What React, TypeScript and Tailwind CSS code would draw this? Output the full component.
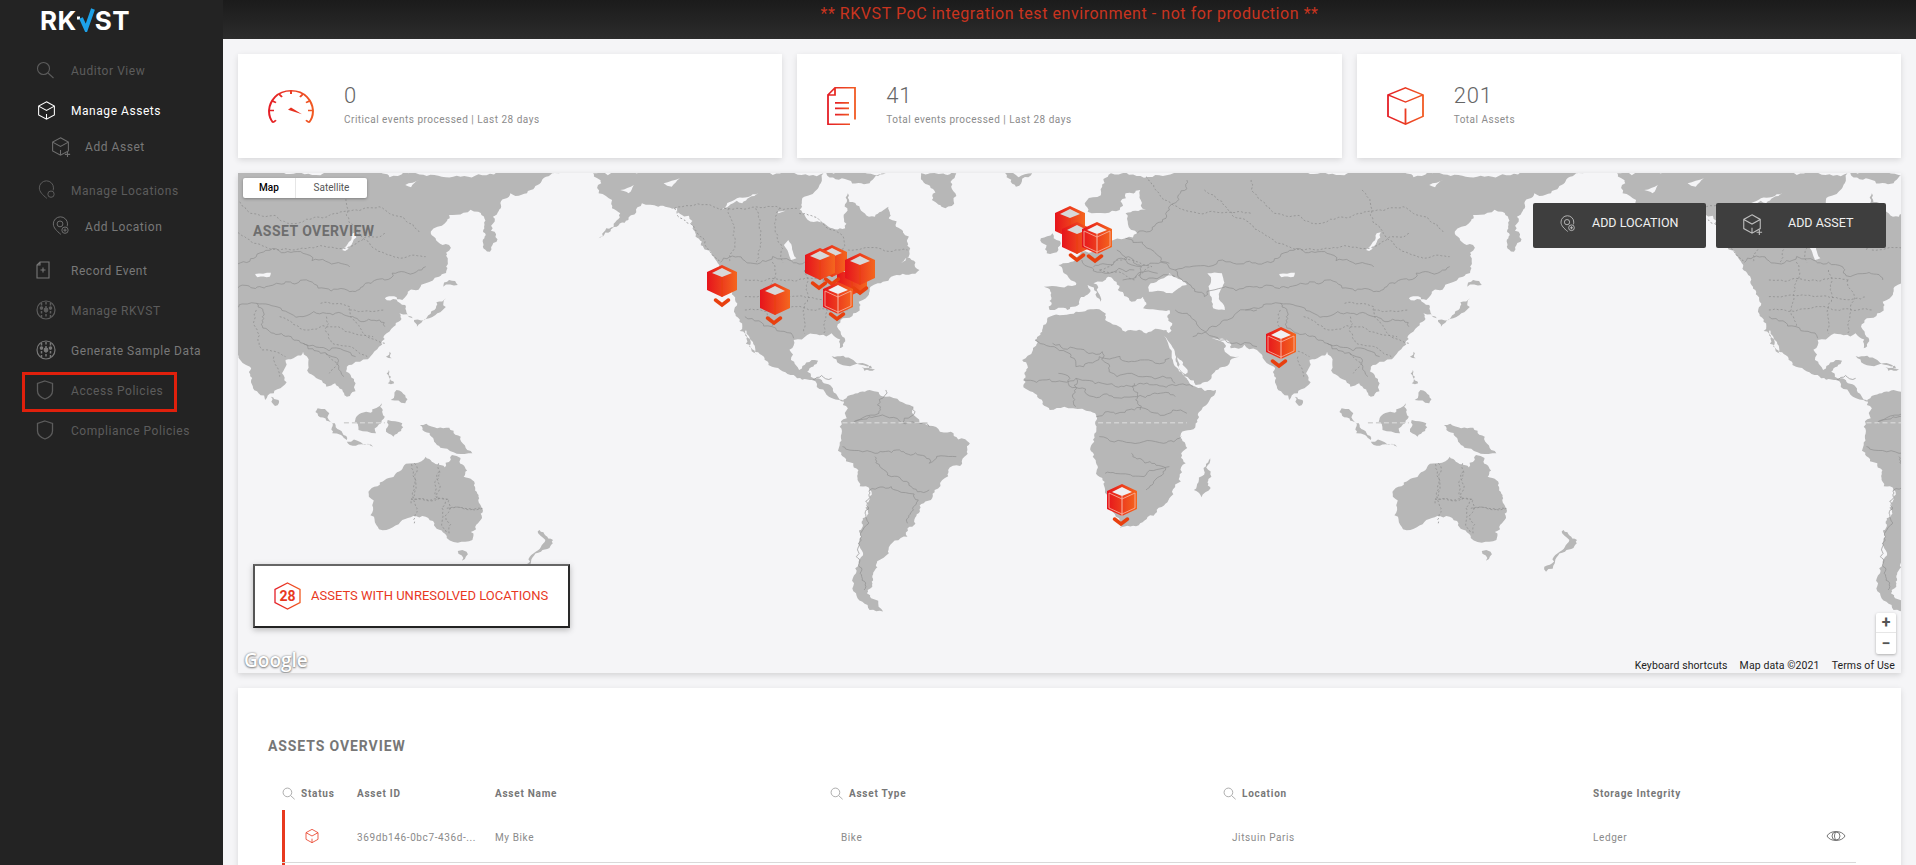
import type { ReactNode } from "react"

const FONT = "font-['Roboto',sans-serif]"

// ---- small line icons ----
function Cube({ size = 20, stroke = "currentColor", plus = false, width = 1.2 }: { size?: number; stroke?: string; plus?: boolean; width?: number }) {
  return (
    <svg width={size} height={size} viewBox="0 0 24 24" fill="none" stroke={stroke} strokeWidth={width}>
      <path d="M12 2 21 7v10l-9 5-9-5V7z M3 7l9 5 9-5 M12 16v6" />
      {plus && <path d="M20 18v6 M17 21h6" />}
    </svg>
  )
}

function Pin({ size = 20, plus = false, stroke = "currentColor" }: { size?: number; plus?: boolean; stroke?: string }) {
  return (
    <svg width={size} height={size} viewBox="0 0 24 24" fill="none" stroke={stroke} strokeWidth="1.2">
      <path d="M13 22C8 18 4 14 4 9.500a8.500 8.500 0 0 1 17 0c0 1-.2 2-.5 3" />
      {plus ? <circle cx="12" cy="9.500" r="3.500" /> : null}
      <circle cx="18" cy="17" r="3.800" />
      {plus && <path d="M18 15v4 M16 17h4" />}
    </svg>
  )
}

function Sliders() {
  return (
    <svg width="20" height="20" viewBox="0 0 20 20" fill="none" stroke="currentColor" strokeWidth="1.2">
      <circle cx="10" cy="10" r="9" />
      <path d="M5.500 3v14 M10 2v16 M14.500 3v14" strokeWidth="1.500" strokeDasharray="2.500 1.500" />
      <circle cx="10" cy="10" r="1.800" fill="currentColor" />
      <circle cx="5.500" cy="8" r="1.200" fill="currentColor" />
      <circle cx="14.500" cy="8" r="1.200" fill="currentColor" />
    </svg>
  )
}

function Shield() {
  return (
    <svg width="18" height="20" viewBox="0 0 18 20" fill="none" stroke="currentColor" strokeWidth="1.3">
      <path d="M9 1 16.500 3.500V11c0 3.500-3.500 6.500-7.500 8-4-1.500-7.500-4.500-7.500-8V3.500z" />
    </svg>
  )
}

function Magnifier({ className = "" }: { className?: string }) {
  return (
    <svg className={className} width="18" height="18" viewBox="0 0 18 18" fill="none" stroke="currentColor" strokeWidth="1.100">
      <circle cx="7.500" cy="7.500" r="6" />
      <path d="M12 12l5.500 5" />
    </svg>
  )
}

function DocPlus() {
  return (
    <svg width="14" height="18" viewBox="0 0 14 18" fill="none" stroke="currentColor" strokeWidth="1.100">
      <path d="M4 1h9v16H1V4z M4 1v3H1 M7 6.500v5 M4.500 9h5" />
    </svg>
  )
}

// ---- sidebar ----
function NavItem({ icon, label, tone = "text-[#5c5c5c]", sub = false }: { icon: ReactNode; label: string; tone?: string; sub?: boolean }) {
  return (
    <div className={sub ? `h-8 mb-2 flex items-center pl-[50px] ${tone}` : `h-10 flex items-center pl-[36px] ${tone}`}>
      <span className="w-[35px] flex">{icon}</span>
      <span className="text-[12px] tracking-[0.55px] whitespace-nowrap pt-[2px]">{label}</span>
    </div>
  )
}

function Sidebar() {
  return (
    <aside className="w-[223px] shrink-0 bg-[#232323] h-full">
      <div className="h-[50px] pl-[40px] flex items-start pt-[5px]">
        <span className="font-['Inter',sans-serif] font-bold text-[26px] leading-[32px] text-white tracking-[0.5px]">RK</span>
        <svg width="20" height="24" viewBox="0 0 20 24" className="mt-[3px] -mx-[1px]" fill="none">
          <path d="M1 10h3" stroke="#fff" strokeWidth="3" />
          <path d="M5 10l5 11L17 1" stroke="#1da1e8" strokeWidth="4" />
        </svg>
        <span className="font-['Inter',sans-serif] font-bold text-[26px] leading-[32px] text-white tracking-[0.5px]">ST</span>
      </div>
      <NavItem icon={<Magnifier />} label="Auditor View" />
      <NavItem icon={<Cube size={21} stroke="#fff" />} label="Manage Assets" tone="text-white" />
      <NavItem sub icon={<Cube size={21} plus stroke="#6f6f6f" />} label="Add Asset" tone="text-[#787878]" />
      <NavItem icon={<Pin />} label="Manage Locations" />
      <NavItem sub icon={<Pin plus stroke="#6f6f6f" />} label="Add Location" tone="text-[#787878]" />
      <NavItem icon={<DocPlus />} label="Record Event" tone="text-[#787878]" />
      <NavItem icon={<Sliders />} label="Manage RKVST" />
      <NavItem icon={<Sliders />} label="Generate Sample Data" tone="text-[#787878]" />
      <div className="relative">
        <NavItem icon={<Shield />} label="Access Policies" />
        <div className="absolute left-[22px] top-[2px] w-[155px] h-[40px] border-[3px] border-[#e0200c]" />
      </div>
      <NavItem icon={<Shield />} label="Compliance Policies" />
    </aside>
  )
}

// ---- stat cards ----
function Gauge() {
  return (
    <svg width="46" height="36" viewBox="0 0 46 48" preserveAspectRatio="none" fill="none" stroke="url(#redOrange)" strokeWidth="2">
      <path d="M5 46C-1 36 0 22 7 12 15 1 31 1 39 12c7 10 8 24 2 34" />
      <path d="M23 3v5 M11 8l3 4 M35 8l-3 4 M4 17l4 2.500 M42 17l-4 2.500 M1 30h5 M45 30h-5 M5 46l3-3 M41 46l-3-3" />
      <path d="M20 29l3-3 11 9z" fill="#e8301f" stroke="none" />
    </svg>
  )
}

function Doc() {
  return (
    <svg width="29" height="38" viewBox="0 0 29 48" preserveAspectRatio="none" fill="none" stroke="url(#redOrange)" strokeWidth="1.800">
      <path d="M8 1h20v40 M1 10 8 1v9H1v37h22" />
      <path d="M8 20h14 M8 27h14 M8 35h14" strokeWidth="2.200" />
    </svg>
  )
}

function BigCube() {
  return (
    <svg width="37" height="38" viewBox="0 0 37 48" preserveAspectRatio="none" fill="none" stroke="url(#redOrange)" strokeWidth="1.800">
      <path d="M18.500 1 36 10v27l-17.500 10L1 37V10z M1 10l17.500 9L36 10 M18.500 27v20" />
    </svg>
  )
}

function StatCard({ icon, value, label }: { icon: ReactNode; value: string; label: string }) {
  return (
    <div className="flex-1 h-[104px] bg-white shadow-[0_2px_6px_rgba(0,0,0,0.12)] flex items-center pl-[30px] gap-[30px]">
      {icon}
      <div className="pb-[2px]">
        <div className="text-[22px] leading-[26px] font-light text-[#666] tracking-[0.8px]">{value}</div>
        <div className="text-[10px] leading-[14px] mt-[4px] text-[#8c8c8c] tracking-[0.5px]">{label}</div>
      </div>
    </div>
  )
}

// ---- map drawing, traced by hand ----
const LAND = "#b7b7b7"
const WATER = "#f5f5f7"

// polygons in the coordinates of a stretched crop, see the group transforms
const americas = [
  "670,10 685,40 680,70 705,90 720,130 680,205 735,150 760,100 790,110 825,115 855,170 880,240 900,280 925,360 940,455 972,555 952,480 985,560 1000,590 1040,615 1075,630 1105,680 1130,695 1145,675 1180,660 1210,680 1260,710 1285,765 1330,785 1365,820 1355,860 1325,900 1300,960 1280,1000 1250,1075 1250,1100 1215,1140 1190,1200 1175,1270 1205,1325 1180,1320 1155,1270 1155,1210 1165,1100 1180,960 1150,880 1125,825 1125,770 1140,715 1130,690 1110,650 1085,625 1065,605 1085,572 1050,600 1035,570 1040,510 1065,495 1110,490 1125,535 1130,500 1120,470 1150,430 1160,395 1195,340 1230,315 1272,300 1250,262 1225,285 1255,235 1215,110 1190,140 1140,70 1135,175 1100,165 1060,135 1055,100 1090,40 1095,10",
  "1100,10 1210,10 1180,40 1140,30",
  "1275,10 1340,10 1320,115 1295,90",
  "1430,10 1480,10 1450,50",
  "1110,558 1150,570 1190,600 1150,585",
  "1165,592 1190,598 1170,602",
]

const eurasia = [
  "145,100 175,50 190,10 1000,10 950,60 915,70 885,140 880,245 870,170 860,125 810,135 780,195 810,225 805,290 770,340 730,390 700,385 735,405 748,445 725,430 715,470 690,530 650,575 635,590 650,640 635,680 615,640 600,650 570,610 560,545 530,570 510,670 495,690 470,600 440,540 395,535 355,490 385,545 410,560 385,590 335,645 300,560 280,495 295,460 290,420 245,415 245,380 225,395 185,320 160,340 172,395 150,345 155,360 115,420 85,420 75,350 130,345 100,285 130,265 170,240 215,205 235,190 215,130 250,120 240,60 215,70 205,120 180,130 150,125",
  "38,570 60,510 85,440 130,425 170,418 180,450 215,485 285,480 300,550 335,650 370,660 345,720 310,790 318,880 290,985 240,1060 205,1075 180,960 165,780 165,740 110,710 85,720 40,645",
  "360,865 362,920 345,982 332,960",
  "70,205 90,190 100,240 80,250",
  "505,680 518,690 512,708",
  "810,330 825,345 800,350",
  "805,385 790,430 755,470 750,450 785,420",
  "708,545 712,565 702,560",
  "707,600 716,640 705,640",
  "720,660 735,700 710,690",
  "585,715 605,730 635,810 610,790",
  "635,815 680,830 640,825",
  "650,745 695,700 700,740 685,790 655,780",
  "705,750 730,760 715,800",
  "760,765 800,775 830,800 850,850 800,835 780,800",
  "672,965 700,930 750,880 770,860 795,885 810,905 815,855 835,920 860,990 868,1020 850,1110 825,1118 805,1095 785,1060 770,1040 730,1050 690,1078 680,1020",
  "825,1143 840,1145 832,1172",
  "965,1080 988,1110 970,1140 950,1180 935,1205 932,1190 955,1150 975,1110",
]

// inland water laid over the land
const eurasiaWater = [
  "258,340 290,310 320,345 295,370 255,365",
  "355,310 380,310 385,420 365,415",
  "281,498 300,555 333,642 327,645 294,558",
  "478,312 505,308 503,320 482,322",
  "645,190 652,187 632,243 627,240",
  "735,45 760,30 745,52",
]
const americasWater = [
  "1030,210 1045,265 1035,270 1022,225",
  "905,120 975,70 945,100 935,92",
  "1010,125 1025,122 1012,130",
  "720,60 745,45 735,70",
  "800,40 830,25 815,50",
]

const americasBorders = [
  "905,277 1060,277",
  "1060,277 1100,320 1130,310 1160,330",
  "950,440 1000,470 1040,505",
  "1075,630 1110,625",
  "1150,760 1190,740 1240,760 1290,770",
  "1130,830 1190,850 1230,840 1290,880 1340,860",
  "1190,860 1220,920 1290,960",
  "1180,960 1220,950 1270,990 1250,1060",
  "1180,960 1165,1100 1170,1260",
  "1210,660 1200,720 1150,760",
  "1260,710 1240,760",
]
const americasDashed = [
  "820,115 905,277",
  "920,115 920,277",
  "970,115 970,277",
  "1015,115 1020,277",
  "820,115 1050,115",
  "950,330 1100,330",
  "950,380 1130,380",
  "950,420 1140,420",
  "1000,277 1000,470",
  "1060,300 1060,490",
  "1095,330 1095,490",
  "1050,130 1125,190 1130,240",
  "1140,240 1250,240",
  "340,880 340,1060",
  "385,880 385,990",
  "340,988 400,988 400,1090",
  "400,1015 465,1015",
]

const eurasiaBorders = [
  "60,510 130,590 170,560 240,570 290,565",
  "90,520 175,545 200,620 300,640",
  "40,630 130,625 175,640 240,640 330,650",
  "165,740 230,720 320,730",
  "170,800 280,820 310,800",
  "180,910 250,915 290,890",
  "225,850 280,890 250,960",
  "300,420 340,470 440,530",
  "350,380 440,350 560,330 640,365 700,330 770,290",
  "300,300 400,280 480,260 560,250 640,290",
  "420,420 480,400 560,440 640,440 700,470",
  "480,400 500,480 560,520 650,560",
  "215,205 300,300 350,380",
  "235,190 290,120 320,30",
  "160,290 220,260 250,330 300,320",
  "560,520 610,560 630,620",
  "330,500 370,470 440,420",
  "140,270 180,310 230,300",
  "200,240 240,290 290,280",
  "210,330 270,310",
  "100,610 160,680 230,680 300,680",
  "230,640 240,720",
  "130,625 130,710",
]
const eurasiaDashed = [
  "430,30 470,130 550,160 620,130 690,110 760,190",
  "350,60 400,140 460,200 540,240 640,230 700,190",
  "620,60 640,160 700,250 770,260",
  "170,300 230,330 260,290 200,270 170,300",
  "520,440 570,480 620,470 680,500",
  "590,400 640,410 660,480 700,520",
  "250,20 280,90 340,130 430,130",
  "600,550 620,580 605,610",
  "600,440 610,520 670,560",
  "640,420 700,420",
  "480,420 490,540 530,560",
  "510,560 520,620",
  "745,1000 745,880",
  "793,905 793,990",
  "745,988 810,988 810,1090",
  "810,1015 868,1015",
]

// splits a traced line and shakes the new points, so a coast does not look like a straight ruler
function roughen(points: string, closed: boolean, amp: number) {
  const pts = points.trim().split(/\s+/).map((p) => p.split(",").map(Number))
  let seed = 0
  for (let i = 0; i < points.length; i++) seed = (seed * 31 + points.charCodeAt(i)) % 233280
  const rand = () => {
    seed = (seed * 9301 + 49297) % 233280
    return seed / 233280 - 0.5
  }
  const out: string[] = []
  const split = (a: number[], b: number[]) => {
    const dx = b[0] - a[0]
    const dy = b[1] - a[1]
    const len = Math.hypot(dx, dy)
    if (len < 9) {
      out.push(`${a[0].toFixed(1)},${a[1].toFixed(1)}`)
      return
    }
    const off = Math.min(len * amp, 9) * rand() * 2
    const mid = [a[0] + dx / 2 - (dy / len) * off, a[1] + dy / 2 + (dx / len) * off * 1.5]
    split(a, mid)
    split(mid, b)
  }
  const last = closed ? pts.length : pts.length - 1
  for (let i = 0; i < last; i++) split(pts[i], pts[(i + 1) % pts.length])
  if (!closed) out.push(pts[pts.length - 1].join(","))
  return out.join(" ")
}

function MapLayer({ land, water, borders, dashed }: { land: string[]; water: string[]; borders: string[]; dashed: string[] }) {
  return (
    <>
      {land.map((p) => <polygon key={p} points={roughen(p, true, 0.2)} fill={LAND} />)}
      {water.map((p) => <polygon key={p} points={roughen(p, true, 0.12)} fill={WATER} />)}
      {borders.map((p) => <polyline key={p} points={roughen(p, false, 0.22)} fill="none" stroke="#8f8f8f" strokeWidth="0.7" vectorEffect="non-scaling-stroke" />)}
      {dashed.map((p) => <polyline key={p} points={roughen(p, false, 0.12)} fill="none" stroke="#8f8f8f" strokeWidth="0.8" strokeDasharray="2 2" vectorEffect="non-scaling-stroke" />)}
    </>
  )
}

function World() {
  return (
    <g id="world">
      <g transform="translate(230,170) scale(0.542,0.3333)">
        <MapLayer land={americas} water={americasWater} borders={americasBorders} dashed={americasDashed} />
        <path d="M1130 758H1290" stroke="#d2d2d2" strokeWidth="1.500" strokeDasharray="5 3" vectorEffect="non-scaling-stroke" />
      </g>
      <g transform="translate(1000,170) scale(0.584,0.3333)">
        <MapLayer land={eurasia} water={eurasiaWater} borders={eurasiaBorders} dashed={eurasiaDashed} />
        <path d="M168 758H320 M630 758H700" stroke="#d2d2d2" strokeWidth="1.500" strokeDasharray="5 3" vectorEffect="non-scaling-stroke" />
      </g>
    </g>
  )
}

// pins: top left of the cube, and where its chevron sits
const pins = [
  { x: 837, y: 263, cx: 0, cy: 0, pale: false },
  { x: 707, y: 265, cx: 722, cy: 303, pale: false },
  { x: 760, y: 283, cx: 774, cy: 321, pale: false },
  { x: 817, y: 245, cx: 832, cy: 282, pale: false },
  { x: 805, y: 248, cx: 819, cy: 286, pale: false },
  { x: 845, y: 253, cx: 860, cy: 291, pale: false },
  { x: 823, y: 282, cx: 837, cy: 317, pale: true },
  { x: 1055, y: 206, cx: 0, cy: 0, pale: false },
  { x: 1062, y: 222, cx: 1077, cy: 258, pale: false },
  { x: 1082, y: 222, cx: 1095, cy: 259, pale: true },
  { x: 1266, y: 327, cx: 1279, cy: 364, pale: true },
  { x: 1107, y: 484, cx: 1121, cy: 522, pale: true },
]

function MapPin({ x, y, cx, cy, pale }: (typeof pins)[number]) {
  const line = pale ? "#f7b7a6" : "#e8400f"
  return (
    <g>
      <g transform={`translate(${x},${y})`}>
        <polygon points="15,0 30,7 30,25 15,32 0,25 0,7" fill="url(#cubeFill)" />
        <polygon points="15,3 25,8 15,12 5,8" fill={pale ? "#f0f0f2" : "#d8d8d8"} />
        <path d="M15 12V32" stroke={line} strokeWidth="1" />
        {pale && <polygon points="2,9 15,15 28,9 28,24 15,30 2,24" fill="none" stroke={line} strokeWidth="0.8" />}
      </g>
      {cx > 0 && <path d={`M${cx - 6.500} ${cy - 3}l6.500 5 6.500-5`} fill="none" stroke="#e8400f" strokeWidth="3.500" strokeLinecap="round" />}
    </g>
  )
}

function MapPanel() {
  return (
    <section className="relative h-[500px] bg-[#f5f5f7] overflow-hidden shadow-[0_2px_6px_rgba(0,0,0,0.15)]">
      <svg className="block" width="1663" height="500" viewBox="238 173 1663 500">
        <defs>
          <World />
        </defs>
        <use href="#world" x="-1024" />
        <use href="#world" />
        <use href="#world" x="1024" />
        {pins.map((p) => <MapPin key={`${p.x}-${p.y}`} {...p} />)}
      </svg>

      <div className="absolute left-[5px] top-[5px] w-[124px] h-[20px] flex bg-white rounded-[2px] shadow-[0_1px_3px_rgba(0,0,0,0.3)] text-[10px] leading-[20px] text-center">
        <div className="w-[53px] text-black font-medium border-r border-[#e6e6e6]">Map</div>
        <div className="flex-1 text-[#565656]">Satellite</div>
      </div>

      <h2 className="absolute left-[15px] top-[49px] text-[14px] leading-[18px] font-bold text-[#6e6e6e] tracking-[0.45px]">ASSET OVERVIEW</h2>

      <div className="absolute right-[15px] top-[30px] flex gap-[10px] text-[12.500px] text-[#f0f0f0]">
        <button className="w-[173px] h-[45px] bg-[#3e3e3e] rounded-[2px] flex items-center pl-[25px] pb-[4px]">
          <span className="w-[34px] text-[#bdbdbd] flex"><Pin size={18} plus /></span>
          ADD LOCATION
        </button>
        <button className="w-[170px] h-[45px] bg-[#3e3e3e] rounded-[2px] flex items-center pl-[25px] pb-[4px]">
          <span className="w-[47px] text-[#bdbdbd] flex"><Cube size={22} plus /></span>
          ADD ASSET
        </button>
      </div>

      <div className="absolute left-[15px] top-[391px] w-[317px] h-[64px] bg-white border-2 border-t-[#666] border-l-[#555] border-r-[#2a2a2a] border-b-[#222] shadow-[0_2px_6px_rgba(0,0,0,0.25)] flex items-center pl-[19px]">
        <div className="relative w-[27px] h-[28px] flex items-center justify-center">
          <svg className="absolute inset-0" width="27" height="28" viewBox="0 0 27 28" fill="none" stroke="url(#redOrange)" strokeWidth="1.300">
            <path d="M13.500 1 26 7.500v13L13.500 27 1 20.500v-13z" />
          </svg>
          <span className="relative text-[14px] font-bold text-[#e8391f]">28</span>
        </div>
        <span className="ml-[10px] text-[13px] text-[#e8391f] whitespace-nowrap">ASSETS WITH UNRESOLVED LOCATIONS</span>
      </div>

      <div className="absolute left-[6px] bottom-[0px] font-['Open_Sans',sans-serif] font-semibold text-[19px] leading-[26px] text-white [text-shadow:0_0_2px_#777,0_1px_2px_#888]">Google</div>

      <div className="absolute right-[5px] top-[440px] w-[20px] h-[41px] bg-white rounded-[2px] shadow-[0_1px_3px_rgba(0,0,0,0.3)] flex flex-col items-center text-[#555] font-bold">
        <div className="h-[20px] w-full flex items-center justify-center border-b border-[#e6e6e6] text-[16px] leading-none">+</div>
        <div className="flex-1 flex items-center justify-center text-[16px] leading-none">−</div>
      </div>

      <div className="absolute right-[6px] bottom-[0px] flex gap-[12px] text-[10.500px] leading-[14px] text-[#222] tracking-[0.1px]">
        <span>Keyboard shortcuts</span>
        <span>Map data ©2021</span>
        <span>Terms of Use</span>
      </div>
    </section>
  )
}

// ---- table ----
const COLUMNS = "grid grid-cols-[75px_138px_335px_393px_370px_233px_auto] items-center"

function TableHead({ label, search = false }: { label: string; search?: boolean }) {
  return (
    <div className="flex items-center">
      {search && <span className="w-[19px] text-[#999]"><Magnifier className="w-[13px] h-[13px]" /></span>}
      <span>{label}</span>
    </div>
  )
}

function AssetsTable() {
  return (
    <section className="bg-white shadow-[0_2px_6px_rgba(0,0,0,0.12)] pt-[48px] h-[300px]">
      <h2 className="ml-[30px] text-[14px] leading-[20px] font-bold text-[#777] tracking-[0.9px]">ASSETS OVERVIEW</h2>
      <div className={`${COLUMNS} mt-[27px] ml-[44px] mr-[45px] h-[20px] text-[10px] font-bold text-[#777] tracking-[0.75px]`}>
        <TableHead search label="Status" />
        <TableHead label="Asset ID" />
        <TableHead label="Asset Name" />
        <TableHead search label="Asset Type" />
        <TableHead search label="Location" />
        <TableHead label="Storage Integrity" />
        <span />
      </div>
      <div className="ml-[44px] mr-[45px] mt-[7px] border-l-[3px] border-[#e8391f] h-[120px]">
        <div className={`${COLUMNS} h-[53px] border-b border-[#d9d9d9] text-[10px] text-[#8a8a8a] tracking-[0.6px] -ml-[3px] pt-[2px]`}>
          <span className="pl-[22px] text-[#e8391f] pb-[2px]"><Cube size={16} /></span>
          <span>369db146-0bc7-436d-...</span>
          <span>My Bike</span>
          <span className="pl-[11px]">Bike</span>
          <span className="pl-[9px]">Jitsuin Paris</span>
          <span>Ledger</span>
          <svg width="20" height="12" viewBox="0 0 20 12" fill="none" stroke="#777" strokeWidth="1" className="mb-[3px]">
            <path d="M1 6c3-6 15-6 18 0-3 6-15 6-18 0z" />
            <circle cx="10" cy="6" r="4" />
            <path d="M10 2c-2 2-2 6 0 8" />
          </svg>
        </div>
      </div>
    </section>
  )
}

export default function App() {
  return (
    <div className={`${FONT} flex w-[1916px] h-[865px] overflow-hidden bg-[#f5f5f7]`}>
      <svg className="absolute w-0 h-0">
        <defs>
          <linearGradient id="redOrange" x1="0" y1="0" x2="1" y2="0">
            <stop offset="0" stopColor="#e41e26" />
            <stop offset="1" stopColor="#f15a22" />
          </linearGradient>
          <linearGradient id="cubeFill" x1="0" y1="0" x2="1" y2="0">
            <stop offset="0" stopColor="#e6141c" />
            <stop offset="1" stopColor="#f4661e" />
          </linearGradient>
        </defs>
      </svg>
      <Sidebar />
      <main className="flex-1 min-w-0">
        <header className="h-[39px] bg-gradient-to-b from-[#1b1b1b] to-[#2c2c2c] text-center text-[16px] leading-[28px] text-[#c9341f] tracking-[0.55px]">
          ** RKVST PoC integration test environment - not for production **
        </header>
        <div className="px-[15px] pt-[15px] flex flex-col gap-[15px]">
          <div className="flex gap-[15px]">
            <StatCard icon={<Gauge />} value="0" label="Critical events processed | Last 28 days" />
            <StatCard icon={<Doc />} value="41" label="Total events processed | Last 28 days" />
            <StatCard icon={<BigCube />} value="201" label="Total Assets" />
          </div>
          <MapPanel />
          <AssetsTable />
        </div>
      </main>
    </div>
  )
}
